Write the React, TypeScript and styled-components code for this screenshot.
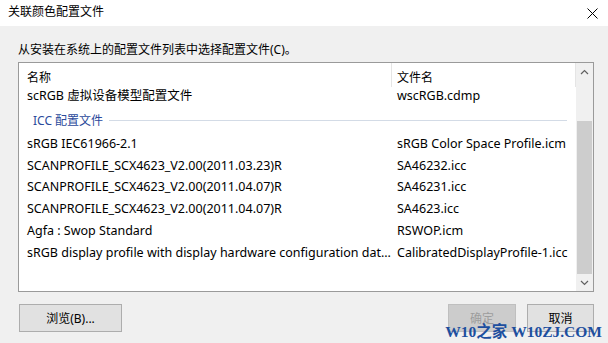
import styled, { createGlobalStyle } from 'styled-components';

const GlobalStyle = createGlobalStyle`
  html, body {
    margin: 0;
    padding: 0;
    background: #f0f0f0;
  }
  body {
    font-family: "Noto Sans", "Noto Sans CJK SC", sans-serif;
    font-size: 12px;
    color: #000;
  }
`;

const Window = styled.div`
  position: relative;
  width: 608px;
  height: 343px;
  display: flex;
  flex-direction: column;
  background: #f0f0f0;
  overflow: hidden;
`;

const TitleBar = styled.div`
  height: 26px;
  flex: none;
  background: #fff;
  display: flex;
  align-items: center;
  justify-content: space-between;
  padding: 0 10px 0 8px;
`;

const Title = styled.span`
  font-size: 12px;
  line-height: 16px;
  margin-top: -2px;
`;

const Body = styled.div`
  display: flex;
  flex-direction: column;
  padding: 0 14px 0 18px;
`;

const Prompt = styled.div`
  height: 36px;
  box-sizing: border-box;
  padding-top: 10px;
  display: flex;
  align-items: center;
`;

const ListBox = styled.div`
  height: 230px;
  box-sizing: border-box;
  border: 1px solid #9a9a9a;
  background: #fff;
  display: flex;
`;

const ListContent = styled.div`
  flex: 1;
  display: flex;
  flex-direction: column;
  overflow: hidden;
`;

const Columns = styled.div`
  display: grid;
  grid-template-columns: 373px 184px;
`;

const Header = styled(Columns)`
  height: 24px;
`;

const HeaderCell = styled.div<{ $pad: number }>`
  box-sizing: border-box;
  height: 24px;
  border-right: 1px solid #e5e5e5;
  padding: 7px 0 0 ${p => p.$pad}px;
  line-height: 16px;
`;

const Row = styled(Columns)<{ $h?: number }>`
  height: ${p => p.$h ?? 21.8}px;
  align-items: center;
  white-space: nowrap;
`;

const Cell = styled.div<{ $pad: number }>`
  padding-left: ${p => p.$pad}px;
  overflow: hidden;
  font-size: 12.5px;
  line-height: 16px;
`;

const GroupHeader = styled.div`
  height: 28px;
  box-sizing: border-box;
  padding: 2px 9px 0 14px;
  display: flex;
  align-items: center;
  gap: 6px;
  color: #2b4a9b;
`;

const GroupLine = styled.div`
  flex: 1;
  height: 1px;
  background: #d3dbe6;
`;

const ScrollBar = styled.div`
  width: 17px;
  flex: none;
  background: #f0f0f0;
  display: flex;
  flex-direction: column;
`;

const ScrollArrow = styled.div`
  height: 17px;
  display: flex;
  align-items: center;
  justify-content: center;
`;

const ScrollTrack = styled.div`
  flex: 1;
  display: flex;
  flex-direction: column;
  justify-content: flex-end;
`;

const ScrollThumb = styled.div`
  height: 153px;
  margin: 0 1px;
  background: #cdcdcd;
`;

const Footer = styled.div`
  display: flex;
  align-items: center;
  margin-top: 12px;
  padding-left: 1px;
  gap: 11px;
`;

const Button = styled.button<{ $w: number }>`
  width: ${p => p.$w}px;
  height: 28px;
  box-sizing: border-box;
  border: 1px solid #adadad;
  background: #e1e1e1;
  font-family: "Noto Sans", "Noto Sans CJK SC", sans-serif;
  font-size: 12px;
  color: #000;
  padding: 0;
  &:disabled {
    background: #cccccc;
    border-color: #bfbfbf;
    color: #9d9d9d;
  }
`;

const Spacer = styled.div`
  flex: 1;
`;

const Watermark = styled.div`
  position: absolute;
  right: 6px;
  bottom: 3px;
  font-family: "Liberation Serif", "Noto Sans CJK SC", serif;
  font-weight: bold;
  font-size: 15.5px;
  line-height: 16px;
  color: #1d4f9f;
  white-space: nowrap;
`;

const rows: [string, string][] = [
  ['sRGB IEC61966-2.1', 'sRGB Color Space Profile.icm'],
  ['SCANPROFILE_SCX4623_V2.00(2011.03.23)R', 'SA46232.icc'],
  ['SCANPROFILE_SCX4623_V2.00(2011.04.07)R', 'SA46231.icc'],
  ['SCANPROFILE_SCX4623_V2.00(2011.04.07)R', 'SA4623.icc'],
  ['Agfa : Swop Standard', 'RSWOP.icm'],
  ['sRGB display profile with display hardware configuration dat...', 'CalibratedDisplayProfile-1.icc'],
];

const Chevron = ({ up }: { up?: boolean }) => (
  <svg width="9" height="6" viewBox="0 0 9 6">
    <path
      d={up ? 'M1 5 L4.5 1.5 L8 5' : 'M1 1 L4.5 4.5 L8 1'}
      fill="none"
      stroke="#606060"
      strokeWidth="1.2"
    />
  </svg>
);

export default function App() {
  return (
    <Window>
      <GlobalStyle />
      <TitleBar>
        <Title>关联颜色配置文件</Title>
        <svg width="11" height="11" viewBox="0 0 11 11">
          <path d="M0.5 0.5 L10.5 10.5 M10.5 0.5 L0.5 10.5" stroke="#000" strokeWidth="1" />
        </svg>
      </TitleBar>
      <Body>
        <Prompt>从安装在系统上的配置文件列表中选择配置文件(C)。</Prompt>
        <ListBox>
          <ListContent>
            <Header>
              <HeaderCell $pad={8}>名称</HeaderCell>
              <HeaderCell $pad={5}>文件名</HeaderCell>
            </Header>
            <Row $h={18}>
              <Cell $pad={8}>scRGB 虚拟设备模型配置文件</Cell>
              <Cell $pad={5}>wscRGB.cdmp</Cell>
            </Row>
            <GroupHeader>
              ICC 配置文件
              <GroupLine />
            </GroupHeader>
            {rows.map(([name, file], i) => (
              <Row key={i}>
                <Cell $pad={8}>{name}</Cell>
                <Cell $pad={5}>{file}</Cell>
              </Row>
            ))}
          </ListContent>
          <ScrollBar>
            <ScrollArrow><Chevron up /></ScrollArrow>
            <ScrollTrack>
              <ScrollThumb />
            </ScrollTrack>
            <ScrollArrow><Chevron /></ScrollArrow>
          </ScrollBar>
        </ListBox>
        <Footer>
          <Button $w={103}>浏览(B)...</Button>
          <Spacer />
          <Button $w={68} disabled>确定</Button>
          <Button $w={67}>取消</Button>
        </Footer>
      </Body>
      <Watermark>W10之家 W10ZJ.COM</Watermark>
    </Window>
  );
}
